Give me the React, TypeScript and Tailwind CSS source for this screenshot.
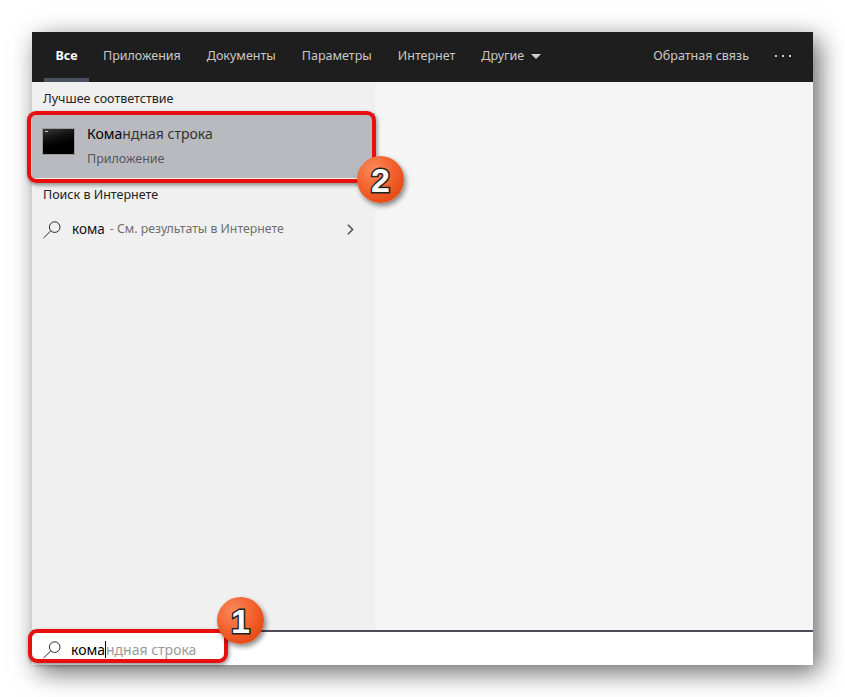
import { ChevronRight } from 'lucide-react';

const tabs = ['Приложения', 'Документы', 'Параметры', 'Интернет'];

function SearchGlyph({ className }: { className?: string }) {
  return (
    <svg viewBox="0 0 20 20" className={className} fill="none" stroke="currentColor" strokeWidth="1">
      <circle cx="12.3" cy="7.5" r="5.6" />
      <path d="M8.2 11.5 0.5 19" />
    </svg>
  );
}

function Badge({ n, className }: { n: string; className: string }) {
  return (
    <div
      className={`absolute flex h-[47px] w-[47px] items-center justify-center rounded-full bg-[radial-gradient(circle_at_35%_30%,#f98a5c_0%,#f2622d_45%,#dc3a06_100%)] shadow-[2px_3px_5px_rgba(0,0,0,0.45)] ${className}`}
    >
      <span className="text-[34px] leading-none font-bold text-white [font-family:'Liberation_Sans',sans-serif] [-webkit-text-stroke:3px_#222] [paint-order:stroke_fill]">
        {n}
      </span>
    </div>
  );
}

export default function App() {
  return (
    <div className="h-[697px] w-[845px] overflow-hidden bg-white p-8 text-[12.5px] [font-family:'Noto_Sans',sans-serif]">
      <div className="relative flex h-[633px] w-[781px] flex-col bg-[#f5f5f5] shadow-[6px_7px_24px_rgba(0,0,0,0.6)]">
        {/* top tabs */}
        <div className="flex h-[50px] shrink-0 items-center bg-[#1e1e1e] text-[#c9c9c9]">
          <div className="ml-3 flex h-full w-[45px] flex-col items-center justify-between">
            <span className="mt-[15px] font-bold text-white">Все</span>
            <span className="h-1 w-full bg-[#4a5160]" />
          </div>
          <div className="ml-[14px] flex items-center gap-[26px]">
            {tabs.map((tab) => (
              <span key={tab} className="-translate-y-px">{tab}</span>
            ))}
            <span className="flex -translate-y-px items-center gap-[7px]">
              Другие
              <span className="h-0 w-0 border-x-[5px] border-t-[5px] border-x-transparent border-t-[#d0d0d0]" />
            </span>
          </div>
          <span className="ml-auto -translate-y-px">Обратная связь</span>
          <span className="mr-[22px] ml-[26px] flex -translate-y-px gap-[5px]">
            <i className="h-[2px] w-[2px] bg-[#d0d0d0]" />
            <i className="h-[2px] w-[2px] bg-[#d0d0d0]" />
            <i className="h-[2px] w-[2px] bg-[#d0d0d0]" />
          </span>
        </div>

        <div className="flex min-h-0 flex-1">
          {/* results */}
          <div className="w-[343px] bg-[#f0f0f0] text-black">
            <div className="flex h-[31px] items-center pt-1 pl-[11px] text-[#222]">Лучшее соответствие</div>
            <div className="flex h-[65px] items-start gap-[13px] bg-[#b9bac0] pl-[11px]">
              <div className="relative mt-4 h-[25px] w-[31px] bg-[linear-gradient(165deg,#3a3a3a_0%,#111_35%,#000_60%)] shadow-[0_0_0_1px_#9a9a9a]">
                <span className="absolute top-[2px] left-[2px] h-px w-[3px] bg-[#ccc]" />
              </div>
              <div className="mt-[11px] flex flex-col gap-[7px]">
                <span className="text-[14px] leading-5 text-[#333]">
                  <span className="text-black">Кома</span>ндная строка
                </span>
                <span className="leading-4 text-[#55565c]">Приложение</span>
              </div>
            </div>
            <div className="flex h-[32px] items-center pt-0.5 pl-[11px] text-[#222]">Поиск в Интернете</div>
            <div className="flex h-[38px] items-center pr-4 pl-[11px]">
              <SearchGlyph className="h-[19px] w-[19px] text-[#222]" />
              <span className="ml-[10px] text-[13.5px] text-[#111]">кома</span>
              <span className="ml-[5px] text-[12.3px] text-[#6e6e6e]">- См. результаты в Интернете</span>
              <ChevronRight className="ml-auto h-[17px] w-[17px] text-[#555]" strokeWidth={2.4} />
            </div>
          </div>
          <div className="flex-1" />
        </div>

        {/* search box */}
        <div className="flex h-[35px] shrink-0 items-center border-t-2 border-[#4b4c58] bg-white pt-px pl-[11px] text-[14px]">
          <SearchGlyph className="h-[19px] w-[19px] text-[#222]" />
          <span className="ml-[9px] text-black">кома</span>
          <span className="h-[17px] w-px bg-black" />
          <span className="text-[#9a9a9a]">ндная строка</span>
        </div>

        {/* annotations */}
        <div className="absolute top-[79px] left-[-5px] h-[72px] w-[349px] rounded-[9px] border-4 border-[#e80f0f] shadow-[1px_2px_4px_rgba(0,0,0,0.45)]" />
        <div className="absolute top-[597px] left-[-4px] h-[34px] w-[200px] rounded-[9px] border-4 border-[#e80f0f] shadow-[1px_2px_4px_rgba(0,0,0,0.45)]" />
        <Badge n="2" className="top-[124px] left-[325px]" />
        <Badge n="1" className="top-[565px] left-[185px]" />
      </div>
    </div>
  );
}
